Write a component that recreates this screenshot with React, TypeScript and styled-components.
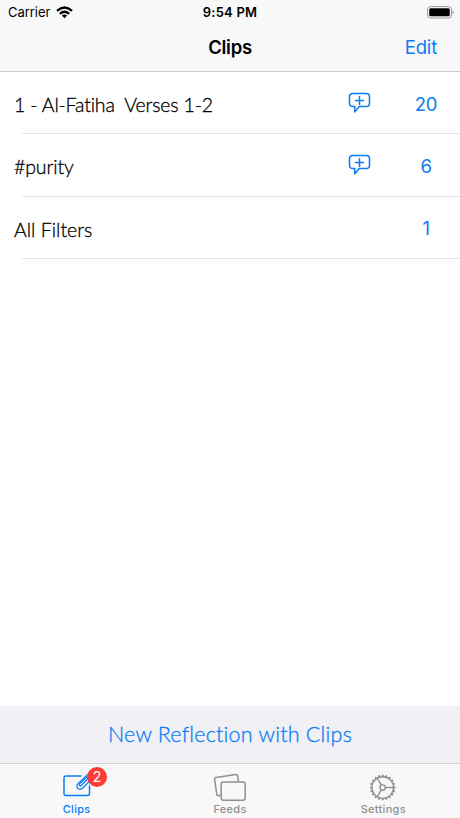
import React from "react";
import styled, { createGlobalStyle } from "styled-components";

const BLUE = "#0a7cf4";
const GRAY = "#8f8f92";

const GlobalStyle = createGlobalStyle`
  body { margin: 0; background: #fff; }
  * { box-sizing: border-box; }
`;

const Screen = styled.main`
  width: 460px;
  height: 818px;
  display: flex;
  flex-direction: column;
  background: #fff;
  color: #000;
  font-family: Inter, "Liberation Sans", sans-serif;
  overflow: hidden;
`;

const Header = styled.header`
  height: 72px;
  background: #f8f8f8;
  border-bottom: 1px solid #c9c9cb;
`;

const StatusBar = styled.div`
  height: 23px;
  display: grid;
  grid-template-columns: 1fr auto 1fr;
  align-items: center;
  padding: 0 6px 0 8px;
  font-size: 13px;
  line-height: 23px;
`;

const Carrier = styled.div`
  display: flex;
  align-items: center;
  gap: 6px;
  letter-spacing: -0.05px;
`;

const StatusText = styled.span`
  padding-top: 1px;
`;

const Time = styled.div`
  font-weight: 600;
  letter-spacing: 0.2px;
  padding-top: 1px;
  margin-right: 2px;
`;

const BatterySlot = styled.div`
  display: flex;
  justify-content: flex-end;
`;

const NavBar = styled.div`
  height: 47px;
  display: grid;
  grid-template-columns: 1fr auto 1fr;
  align-items: center;
  padding: 0 23px;
`;

const Title = styled.h1`
  grid-column: 2;
  margin: 0;
  font-size: 18.5px;
  line-height: 46px;
  font-weight: 600;
  letter-spacing: -0.3px;
`;

const EditButton = styled.button`
  justify-self: end;
  border: 0;
  padding: 0;
  background: none;
  color: ${BLUE};
  font: 400 18.5px/46px Inter, sans-serif;
  letter-spacing: -0.2px;
`;

const List = styled.ul`
  flex: 1;
  list-style: none;
  margin: 0;
  padding: 0;
`;

const Row = styled.li`
  height: 62.5px;
  display: grid;
  grid-template-columns: 334px 24px 1fr;
  align-items: center;
  padding: 0 0 0 14px;
  background: linear-gradient(#e4e4e6, #e4e4e6) 22px 100% / 438px 1px no-repeat;

  &:first-child {
    height: 62px;
  }
`;

const RowLabel = styled.span<{ $spacing: number }>`
  font-family: Lato, sans-serif;
  font-size: 19.5px;
  line-height: 30px;
  padding-top: 4px;
  font-weight: 300;
  -webkit-text-stroke: 0.3px currentColor;
  white-space: pre;
  letter-spacing: ${(p) => p.$spacing}px;
`;

const Count = styled.span`
  grid-column: 3;
  justify-self: center;
  padding-left: 20px;
  padding-top: 1px;
  font-size: 18.5px;
  line-height: 30px;
  color: ${BLUE};
  letter-spacing: -0.3px;
`;

const Compose = styled.button`
  height: 57px;
  border: 0;
  padding: 0 0 2px;
  background: #f0f0f5;
  color: ${BLUE};
  font: 300 21.5px/54px Lato, sans-serif;
  -webkit-text-stroke: 0.3px currentColor;
  letter-spacing: 0.22px;
`;

const TabBar = styled.nav`
  height: 55px;
  display: grid;
  grid-template-columns: repeat(3, 1fr);
  background: #f8f8f8;
  border-top: 1px solid #d4d4d6;
`;

const Tab = styled.div<{ $active?: boolean }>`
  position: relative;
  display: flex;
  flex-direction: column;
  align-items: center;
  padding-top: 7px;
  color: ${(p) => (p.$active ? BLUE : GRAY)};
`;

const TabLabel = styled.span`
  font-size: 11px;
  line-height: 14px;
  font-weight: 500;
  letter-spacing: 0.3px;
`;

const Badge = styled.span`
  position: absolute;
  left: 87px;
  top: 3px;
  width: 20px;
  height: 20px;
  border-radius: 50%;
  background: #fc3d35;
  color: #fff;
  font-size: 14px;
  line-height: 19px;
  text-align: center;
`;

const WifiIcon = () => (
  <svg width="17" height="13" viewBox="0 0 17 13">
    <g fill="none" stroke="#000" strokeWidth="2.3">
      <path d="M1 4.8 Q8.5 -1.8 16 4.8" />
      <path d="M3.8 7.8 Q8.5 3.8 13.2 7.8" />
    </g>
    <path d="M5.9 9.6 Q8.5 7.5 11.1 9.6 L8.5 12.3Z" fill="#000" />
  </svg>
);

const BatteryIcon = () => (
  <svg width="27" height="13" viewBox="0 0 27 13">
    <rect x=".5" y=".6" width="24" height="11.4" rx="3" fill="none" stroke="#999" />
    <rect x="2.2" y="2.3" width="20.6" height="8" rx="1.5" />
    <path d="M25.5 4.3 Q27.8 6.3 25.5 8.3Z" fill="#999" />
  </svg>
);

const BubbleIcon = () => (
  <svg width="24" height="22" viewBox="0 0 24 22" fill="none" stroke={BLUE} strokeWidth="1.5" strokeLinejoin="round" strokeLinecap="round">
    <path d="M4.8 1.5H18.2Q21.5 1.5 21.5 4.8V11.2Q21.5 14.5 18.2 14.5H11.2L6.8 19.9V14.5H4.8Q1.5 14.5 1.5 11.2V4.8Q1.5 1.5 4.8 1.5Z" />
    <path d="M11.5 4.4V12.4M7.5 8.4H15.5" />
  </svg>
);

const ClipsIcon = () => (
  <svg width="34" height="31" viewBox="0 0 34 31" fill="none" stroke="currentColor" strokeWidth="1.5" strokeLinecap="round">
    <path d="M21 5H6Q4 5 4 7V22.5Q4 24.5 6 24.5H27.5Q29.5 24.5 29.5 22.5V15" />
    <g strokeWidth="1.25">
      <path d="M27.5 3.6L18.2 12.4Q15.8 15.2 17.8 17.4Q20.2 19.4 22.9 17L31 8.6" />
      <path d="M30.5 4.9L21.8 14Q20.4 15.3 19.5 14.4Q18.7 13.5 20 12.2L27 5.7" />
    </g>
  </svg>
);

const FeedsIcon = () => (
  <svg width="34" height="31" viewBox="0 0 34 31" fill="none" stroke="currentColor" strokeWidth="1.5" strokeLinejoin="round">
    <path d="M8 24.3L5.5 24.7Q4.1 24.9 3.8 23.4L1.6 8.4Q1.4 6.8 3 6.5L22.8 3.6Q24.4 3.3 24.7 4.9L25.3 10.3" />
    <rect x="8.2" y="11" width="24" height="18.3" rx="2.2" />
  </svg>
);

const teeth = Array.from({ length: 20 }, (_, i) => i * 18);

const GearIcon = () => (
  <svg width="34" height="31" viewBox="0 0 34 31" fill="none" stroke="currentColor" strokeWidth="1.35">
    <g transform="translate(16.7 16.5)">
      <circle r="10.8" />
      <circle r="2.7" />
      {teeth.map((angle) => (
        <path key={angle} d="M10.8 0H12.8" strokeWidth="2" transform={`rotate(${angle})`} />
      ))}
      {[0, 120, 240].map((angle) => (
        <path key={angle} d="M2.7 0H10.8" transform={`rotate(${angle})`} />
      ))}
    </g>
  </svg>
);

const clips = [
  { label: "1 - Al-Fatiha  Verses 1-2", count: 20, reply: true, spacing: -0.16 },
  { label: "#purity", count: 6, reply: true, spacing: -0.1 },
  { label: "All Filters", count: 1, reply: false, spacing: 0.03 },
];

export default function App() {
  return (
    <Screen>
      <GlobalStyle />
      <Header>
        <StatusBar>
          <Carrier><StatusText>Carrier</StatusText><WifiIcon /></Carrier>
          <Time>9:54 PM</Time>
          <BatterySlot><BatteryIcon /></BatterySlot>
        </StatusBar>
        <NavBar>
          <Title>Clips</Title>
          <EditButton>Edit</EditButton>
        </NavBar>
      </Header>
      <List>
        {clips.map((clip) => (
          <Row key={clip.label}>
            <RowLabel $spacing={clip.spacing}>{clip.label}</RowLabel>
            {clip.reply && <BubbleIcon />}
            <Count>{clip.count}</Count>
          </Row>
        ))}
      </List>
      <Compose>New Reflection with Clips</Compose>
      <TabBar>
        <Tab $active><ClipsIcon /><TabLabel>Clips</TabLabel><Badge>2</Badge></Tab>
        <Tab><FeedsIcon /><TabLabel>Feeds</TabLabel></Tab>
        <Tab><GearIcon /><TabLabel>Settings</TabLabel></Tab>
      </TabBar>
    </Screen>
  );
}
